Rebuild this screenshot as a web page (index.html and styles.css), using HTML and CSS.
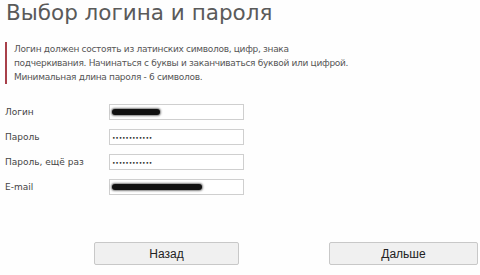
FILE: index.html
```html
<!DOCTYPE html>
<html lang="ru">
<head>
<meta charset="utf-8">
<title>Выбор логина и пароля</title>
<link rel="stylesheet" href="styles.css">
</head>
<body>
<div class="page">
  <h1 class="title">Выбор логина и пароля</h1>
  <div class="notice">
    Логин должен состоять из латинских символов, цифр, знака<br>
    подчеркивания. Начинаться с буквы и заканчиваться буквой или цифрой.<br>
    Минимальная длина пароля - 6 символов.
  </div>
  <form class="form">
    <div class="row">
      <span class="label">Логин</span>
      <div class="field"><span class="blur blur-login"></span></div>
    </div>
    <div class="row">
      <span class="label">Пароль</span>
      <div class="field"><span class="dots">••••••••••••</span></div>
    </div>
    <div class="row">
      <span class="label">Пароль, ещё раз</span>
      <div class="field"><span class="dots">••••••••••••</span></div>
    </div>
    <div class="row">
      <span class="label">E-mail</span>
      <div class="field"><span class="blur blur-mail"></span></div>
    </div>
  </form>
  <div class="buttons">
    <button type="button" class="btn btn-back">Назад</button>
    <button type="button" class="btn btn-next">Дальше</button>
  </div>
</div>
</body>
</html>
```
FILE: styles.css
```css
html, body {
  margin: 0;
  padding: 0;
  background: #fefefe;
}
.page {
  width: 480px;
  height: 275px;
  padding-left: 5px;
  box-sizing: border-box;
  font-family: "DejaVu Sans", Verdana, sans-serif;
  color: #555;
}
.title {
  margin: 0;
  padding-left: 1px;
  font-size: 21.5px;
  line-height: 26px;
  font-weight: normal;
  color: #5a5a5a;
}
.notice {
  margin-top: 16px;
  border-left: 2px solid #a8404a;
  padding-left: 7px;
  font-size: 9px;
  letter-spacing: -0.3px;
  line-height: 14px;
  color: #555;
}
.form {
  margin-top: 20px;
  display: flex;
  flex-direction: column;
  gap: 9px;
}
.row {
  display: flex;
  align-items: center;
  height: 16px;
}
.label {
  width: 104px;
  font-size: 9px;
  color: #444;
}
.field {
  width: 131px;
  height: 14px;
  border: 1px solid #cfcfcf;
  background: #fff;
  display: flex;
  align-items: center;
  padding-left: 2px;
}
.dots {
  font-size: 6px;
  letter-spacing: -0.2px;
  color: #222;
  font-family: "DejaVu Sans", sans-serif;
}
.blur {
  display: block;
  height: 6px;
  border-radius: 3px;
  background: #111;
  box-shadow: 0 0 2px 1px rgba(0,0,0,0.5);
}
.blur-login { width: 48px; }
.blur-mail { width: 90px; }
.buttons {
  margin-top: 47px;
  display: flex;
  justify-content: space-between;
  padding-left: 89px;
  padding-right: 2px;
}
.btn {
  width: 145px;
  height: 23px;
  border: 1px solid #c8c8c8;
  border-radius: 2px;
  background: #f0f0f0;
  font-family: "Liberation Sans", Arial, sans-serif;
  font-size: 12px;
  color: #222;
  padding: 0;
}
.btn-next { width: 149px; }
```
